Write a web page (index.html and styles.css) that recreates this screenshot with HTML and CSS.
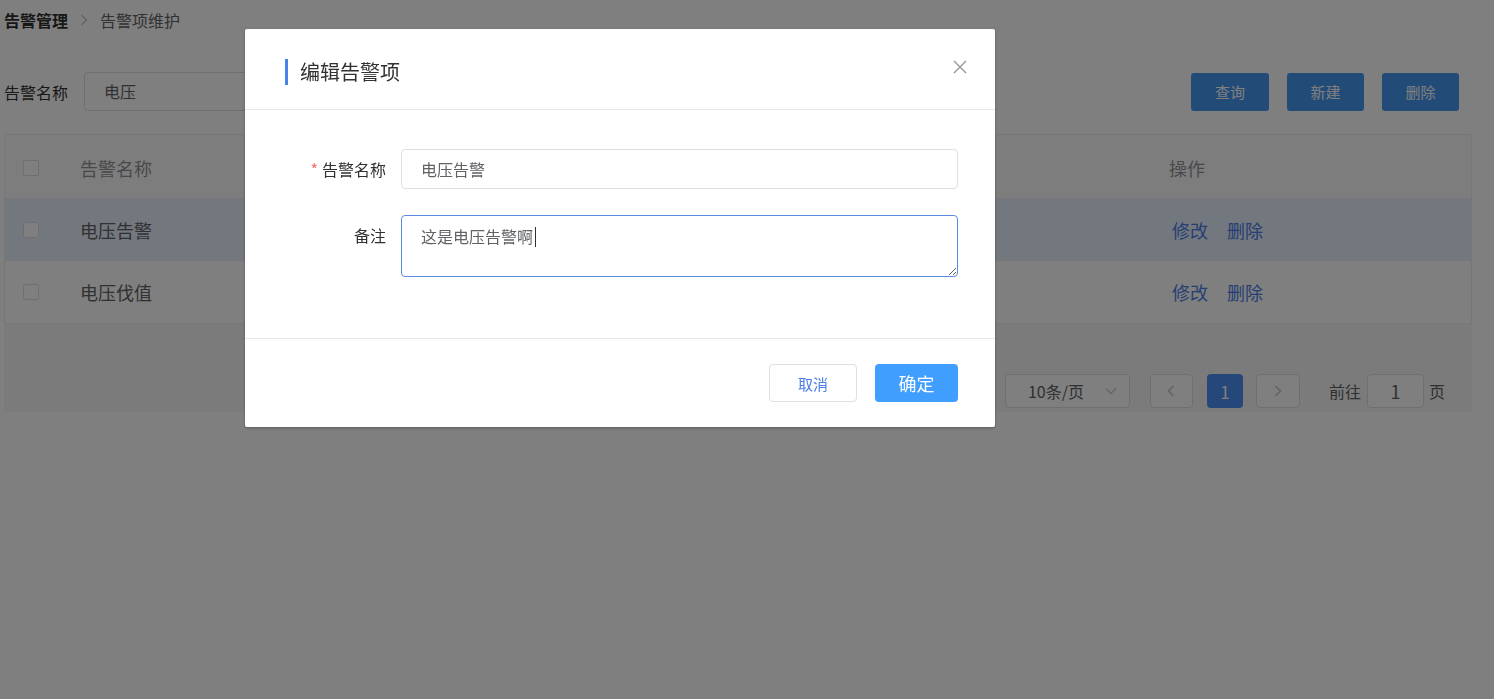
FILE: index.html
```html
<!DOCTYPE html>
<html lang="zh-CN">
<head>
<meta charset="utf-8">
<title>告警项维护</title>
<link rel="stylesheet" href="styles.css">
</head>
<body>
<div class="page">
  <div class="breadcrumb">
    <span class="crumb-strong">告警管理</span>
    <svg class="crumb-sep" width="8" height="12" viewBox="0 0 8 12"><path d="M1.5 1 L6.5 6 L1.5 11" fill="none" stroke="#c0c4cc" stroke-width="1.2"/></svg>
    <span class="crumb">告警项维护</span>
  </div>

  <div class="search-row">
    <div class="search-left">
      <span class="search-label">告警名称</span>
      <div class="search-input">电压</div>
    </div>
    <div class="search-actions">
      <button class="btn-primary wide">查询</button>
      <button class="btn-primary">新建</button>
      <button class="btn-primary">删除</button>
    </div>
  </div>

  <div class="table-box">
    <div class="table">
      <div class="tr th">
        <div class="td c-check"><span class="checkbox"></span></div>
        <div class="td c-name">告警名称</div>
        <div class="td c-remark">备注</div>
        <div class="td c-ops">操作</div>
      </div>
      <div class="tr hl">
        <div class="td c-check"><span class="checkbox"></span></div>
        <div class="td c-name">电压告警</div>
        <div class="td c-remark">这是电压告警啊</div>
        <div class="td c-ops"><a class="link">修改</a><a class="link">删除</a></div>
      </div>
      <div class="tr last">
        <div class="td c-check"><span class="checkbox"></span></div>
        <div class="td c-name">电压伐值</div>
        <div class="td c-remark"></div>
        <div class="td c-ops"><a class="link">修改</a><a class="link">删除</a></div>
      </div>
    </div>
    <div class="pager">
      <div class="pg-size">10条/页
        <svg class="pg-arrow" width="12" height="8" viewBox="0 0 12 8"><path d="M1 1.5 L6 6.5 L11 1.5" fill="none" stroke="#c0c4cc" stroke-width="1.2"/></svg>
      </div>
      <div class="pg-btn prev"><svg width="8" height="12" viewBox="0 0 8 12"><path d="M6.5 1 L1.5 6 L6.5 11" fill="none" stroke="#c0c4cc" stroke-width="1.5"/></svg></div>
      <div class="pg-num">1</div>
      <div class="pg-btn next"><svg width="8" height="12" viewBox="0 0 8 12"><path d="M1.5 1 L6.5 6 L1.5 11" fill="none" stroke="#c0c4cc" stroke-width="1.5"/></svg></div>
      <span class="pg-text goto">前往</span>
      <div class="pg-input">1</div>
      <span class="pg-text">页</span>
    </div>
  </div>
</div>

<div class="mask">
  <div class="dialog">
    <div class="dlg-header">
      <span class="dlg-bar"></span>
      <span class="dlg-title">编辑告警项</span>
      <svg class="dlg-close" width="14" height="14" viewBox="0 0 14 14"><path d="M1 1 L13 13 M13 1 L1 13" stroke="#909399" stroke-width="1.3" fill="none"/></svg>
    </div>
    <div class="dlg-body">
      <div class="form-item">
        <label class="form-label"><span class="req">*</span>告警名称</label>
        <div class="form-input">电压告警</div>
      </div>
      <div class="form-item item-gap">
        <label class="form-label">备注</label>
        <div class="ta-wrap">
          <textarea class="form-textarea">这是电压告警啊</textarea>
          <span class="caret"></span>
        </div>
      </div>
    </div>
    <div class="dlg-footer">
      <button class="btn-cancel">取消</button>
      <button class="btn-ok">确定</button>
    </div>
  </div>
</div>
</body>
</html>
```

FILE: styles.css
```css
* { box-sizing: border-box; }
html, body { margin: 0; padding: 0; }
body {
  background: #ffffff;
  font-family: "Noto Sans CJK SC", "Noto Sans", sans-serif;
  color: #606266;
  width: 1494px;
  height: 699px;
  overflow: hidden;
}
.page { padding: 0 22px 0 4px; }

.breadcrumb {
  height: 40px;
  display: flex;
  align-items: center;
  font-size: 16px;
}
.crumb-strong { font-weight: 700; color: #303133; }
.crumb-sep { margin: 0 12px 0 12px; }
.crumb { color: #606266; }

.search-row {
  margin-top: 32px;
  height: 39px;
  display: flex;
  justify-content: space-between;
  align-items: center;
}
.search-left { display: flex; align-items: center; }
.search-label { font-size: 16px; color: #303133; width: 80px; }
.search-input {
  width: 300px;
  height: 39px;
  border: 1px solid #dcdfe6;
  border-radius: 4px;
  padding-left: 19px;
  line-height: 37px;
  font-size: 16px;
  color: #606266;
}
.search-actions { display: flex; gap: 18px; padding-right: 13px; }
.btn-primary {
  width: 77px;
  height: 38px;
  border: none;
  border-radius: 3px;
  background: #4596f0;
  color: #ffffff;
  font-family: inherit;
  font-size: 15px;
}
.btn-primary.wide { width: 78px; }

.table-box {
  margin-top: 23px;
  background: #f6f6f7;
  height: 278px;
  width: 1468px;
}
.table {
  background: #ffffff;
  border: 1px solid #ebeef5;
  border-radius: 4px 4px 0 0;
}
.tr {
  display: grid;
  grid-template-columns: 56px 500px 589px 1fr;
  height: 62px;
  border-bottom: 1px solid #ebeef5;
  align-items: center;
  font-size: 18px;
  color: #606266;
}
.tr.last { height: 62px; border-bottom: none; }
.th { background: #fbfbfb; color: #909399; height: 64px; padding-top: 2px; }
.tr.hl { background: #e6eefc; }
.td { padding-left: 19px; white-space: nowrap; overflow: hidden; }
.c-check { padding-left: 18px; display: flex; align-items: center; }
.c-ops { padding-left: 19px; }
.checkbox {
  width: 16px;
  height: 16px;
  border: 1px solid #dcdfe6;
  border-radius: 2px;
  background: #fff;
  display: inline-block;
}
.link { color: #4a7ee8; margin-left: 3px; margin-right: 16px; }

.pager {
  margin-top: 50px;
  display: flex;
  justify-content: flex-end;
  align-items: center;
  padding-right: 27px;
  height: 34px;
  font-size: 16px;
  color: #606266;
}
.pg-size {
  width: 125px;
  height: 34px;
  border: 1px solid #dcdfe6;
  border-radius: 4px;
  background: #fff;
  display: flex;
  align-items: center;
  padding-left: 22px;
  position: relative;
}
.pg-arrow { position: absolute; right: 12px; top: 12px; }
.pg-btn {
  width: 44px;
  height: 34px;
  border: 1px solid #dcdfe6;
  border-radius: 4px;
  background: #fff;
  display: flex;
  align-items: center;
  justify-content: center;
}
.pg-btn.prev { margin-left: 20px; width: 43px; }
.pg-num {
  margin: 0 13px 0 14px;
  width: 36px;
  height: 34px;
  border-radius: 4px;
  background: #4d8ef5;
  color: #fff;
  display: flex;
  align-items: center;
  justify-content: center;
  font-size: 17px;
}
.pg-text.goto { margin-left: 29px; margin-right: 6px; }
.pg-input {
  width: 57px;
  height: 34px;
  border: 1px solid #dcdfe6;
  border-radius: 4px;
  background: #fff;
  display: flex;
  align-items: center;
  justify-content: center;
  font-size: 18px;
  margin-right: 5px;
}

/* modal */
.mask {
  position: fixed;
  inset: 0;
  background: rgba(0, 0, 0, 0.5);
}
.dialog {
  margin: 29px 0 0 245px;
  width: 750px;
  background: #ffffff;
  border-radius: 2px;
  box-shadow: 0 1px 3px rgba(0, 0, 0, 0.3);
  position: relative;
}
.dlg-header {
  height: 81px;
  padding: 30px 40px 0;
  border-bottom: 1px solid #e4e7ed;
  display: flex;
  align-items: flex-start;
}
.dlg-bar {
  width: 3px;
  height: 26px;
  background: #4a84e8;
  margin-right: 12px;
}
.dlg-title {
  font-size: 20px;
  line-height: 26px;
  color: #303133;
}
.dlg-close { position: absolute; right: 28px; top: 31px; }

.dlg-body {
  padding: 39px 37px 61px 0;
  border-bottom: 1px solid #e4e7ed;
  height: 229px;
}
.form-item { display: flex; align-items: flex-start; }
.item-gap { margin-top: 26px; }
.form-label {
  width: 156px;
  padding-right: 15px;
  text-align: right;
  line-height: 40px;
  font-size: 16px;
  color: #303133;
}
.req { color: #f56c6c; margin-right: 4px; }
.form-input {
  flex: 1;
  height: 40px;
  border: 1px solid #dcdfe6;
  border-radius: 4px;
  padding-left: 19px;
  line-height: 38px;
  font-size: 16px;
  color: #606266;
}
.ta-wrap { flex: 1; position: relative; height: 62px; }
.form-textarea {
  display: block;
  width: 100%;
  height: 62px;
  border: 1px solid #5a8be2;
  border-radius: 4px;
  padding: 9px 19px;
  font-family: inherit;
  font-size: 16px;
  line-height: 22px;
  color: #606266;
  outline: none;
  resize: vertical;
}
.caret {
  position: absolute;
  left: 134px;
  top: 12px;
  width: 1px;
  height: 20px;
  background: #303133;
}

.dlg-footer {
  height: 88px;
  padding: 25px 37px 0 0;
  display: flex;
  justify-content: flex-end;
  gap: 18px;
}
.btn-cancel {
  width: 88px;
  height: 38px;
  border: 1px solid #dcdfe6;
  border-radius: 4px;
  background: #fff;
  color: #4a7ee8;
  font-family: inherit;
  font-size: 15px;
}
.btn-ok {
  width: 83px;
  height: 38px;
  border: none;
  border-radius: 4px;
  background: #409eff;
  color: #ffffff;
  font-family: inherit;
  font-size: 18px;
}
```
